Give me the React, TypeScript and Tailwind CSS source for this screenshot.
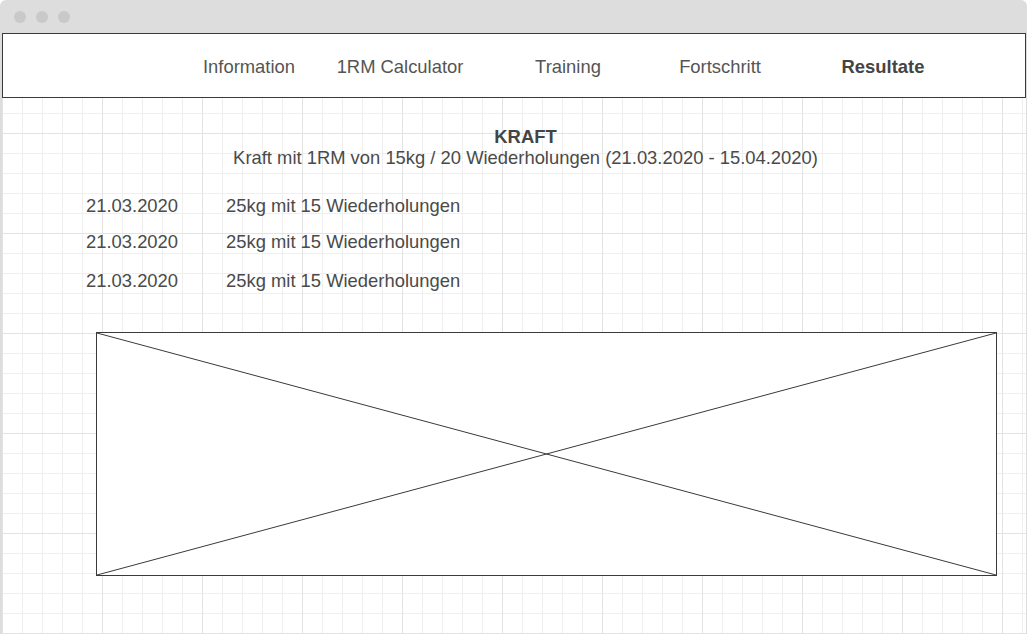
import React from "react";

const rows = [
  { date: "21.03.2020", text: "25kg mit 15 Wiederholungen", mt: "mt-[27px]" },
  { date: "21.03.2020", text: "25kg mit 15 Wiederholungen", mt: "mt-[15px]" },
  { date: "21.03.2020", text: "25kg mit 15 Wiederholungen", mt: "mt-[18px]" },
];

export default function App() {
  return (
    <div
      className="w-[1027px] h-[634px] overflow-hidden bg-[#dddddd] rounded-t-[6px] flex flex-col"
      style={{ fontFamily: '"Liberation Sans", Arial, sans-serif' }}
    >
      <div className="h-[33px] shrink-0 flex items-center gap-[10px] pl-[14px]">
        <span className="w-[12px] h-[12px] rounded-full bg-[#c9c9c9]" />
        <span className="w-[12px] h-[12px] rounded-full bg-[#c9c9c9]" />
        <span className="w-[12px] h-[12px] rounded-full bg-[#c9c9c9]" />
      </div>
      <div className="flex-1 ml-[2px] mr-[1px] bg-white bg-[linear-gradient(to_right,#e3e3e3_1px,transparent_1px),linear-gradient(to_bottom,#e3e3e3_1px,transparent_1px),linear-gradient(to_right,#efefef_1px,transparent_1px),linear-gradient(to_bottom,#efefef_1px,transparent_1px)] bg-[size:100px_100px,100px_100px,20px_20px,20px_20px] flex flex-col">
        <nav className="h-[65px] shrink-0 bg-white border border-[#3a3a3a] flex items-center pt-[2px] pl-[171px] text-[18.4px] leading-[21px] text-[#555555]">
          <div className="w-[150px] text-center">Information</div>
          <div className="w-[152px] text-center">1RM Calculator</div>
          <div className="w-[184px] text-center">Training</div>
          <div className="w-[120px] text-center">Fortschritt</div>
          <div className="w-[206px] text-center font-bold text-[#444444]">Resultate</div>
        </nav>

        <div className="mt-[28px] pl-[23px] text-center text-[18.4px] leading-[21px] text-[#4a4a4a]">
          <div className="font-bold text-[#444444]">KRAFT</div>
          <div>Kraft mit 1RM von 15kg / 20 Wiederholungen (21.03.2020 - 15.04.2020)</div>
        </div>

        <div className="pl-[84px] text-[18.4px] leading-[21px] text-[#4a4a4a]">
          {rows.map((r, i) => (
            <div key={i} className={`flex ${r.mt}`}>
              <div className="w-[140px]">{r.date}</div>
              <div>{r.text}</div>
            </div>
          ))}
        </div>

        <div className="mt-[41px] ml-[94px] w-[901px] h-[244px] bg-white border border-[#3a3a3a] relative">
          <svg className="absolute inset-0 w-full h-full" viewBox="0 0 100 100" preserveAspectRatio="none">
            <line x1="0" y1="0" x2="100" y2="100" stroke="#3a3a3a" strokeWidth="1" vectorEffect="non-scaling-stroke" />
            <line x1="0" y1="100" x2="100" y2="0" stroke="#3a3a3a" strokeWidth="1" vectorEffect="non-scaling-stroke" />
          </svg>
        </div>
      </div>
    </div>
  );
}
